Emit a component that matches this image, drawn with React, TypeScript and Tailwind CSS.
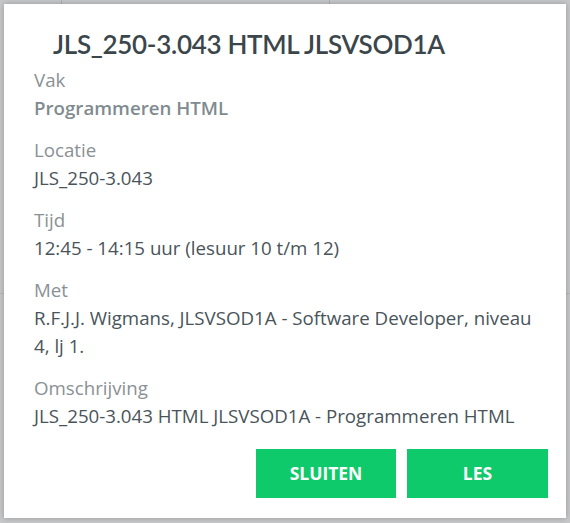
import React from 'react'

const FIELDS = [
  { label: 'Vak', value: 'Programmeren HTML', strong: true },
  { label: 'Locatie', value: 'JLS_250-3.043' },
  { label: 'Tijd', value: '12:45 - 14:15 uur (lesuur 10 t/m 12)' },
  { label: 'Met', value: 'R.F.J.J. Wigmans, JLSVSOD1A - Software Developer, niveau 4, lj 1.' },
  { label: 'Omschrijving', value: 'JLS_250-3.043 HTML JLSVSOD1A - Programmeren HTML' },
]

export default function App() {
  return (
    <div className="relative w-[570px] h-[523px] overflow-hidden bg-[#c6c8c9] p-[4px] font-['Open_Sans',sans-serif]">
      {/* faint page behind the overlay */}
      <div className="absolute left-[61px] top-0 h-[4px] w-px bg-[#aeb1b2]" />
      <div className="absolute left-[329px] top-0 h-[4px] w-px bg-[#aeb1b2]" />
      <div className="absolute left-0 top-[293px] h-px w-[4px] bg-[#b7babb]" />
      <div className="absolute right-0 top-[293px] h-px w-[4px] bg-[#b7babb]" />

      {/* dialog */}
      <div className="relative flex h-[514px] w-[562px] flex-col bg-white shadow-[0_0_6px_rgba(0,0,0,0.25)]">
        <h2 className="pl-[49px] pt-[24px] text-[26px] leading-[32px] font-semibold tracking-[-0.3px] text-[#3b464b] font-['Lato',sans-serif]">
          JLS_250-3.043 HTML JLSVSOD1A
        </h2>

        <div className="mt-[6px] flex w-[540px] flex-col gap-[14px] pl-[30px] text-[18.7px] leading-[28px]">
          {FIELDS.map((f) => (
            <div key={f.label}>
              <div className="text-[#8a9194]">{f.label}</div>
              <div className={f.strong ? 'font-semibold text-[#7f8b90]' : 'text-[#49545a]'}>{f.value}</div>
            </div>
          ))}
        </div>

        <div className="mt-[19px] flex justify-end gap-[11px] pr-[18px]">
          <button className="h-[49px] w-[140px] bg-[#0fca6a] text-[17.5px] font-bold text-white">SLUITEN</button>
          <button className="h-[49px] w-[141px] bg-[#0fca6a] text-[17.5px] font-bold text-white">LES</button>
        </div>
      </div>
    </div>
  )
}
